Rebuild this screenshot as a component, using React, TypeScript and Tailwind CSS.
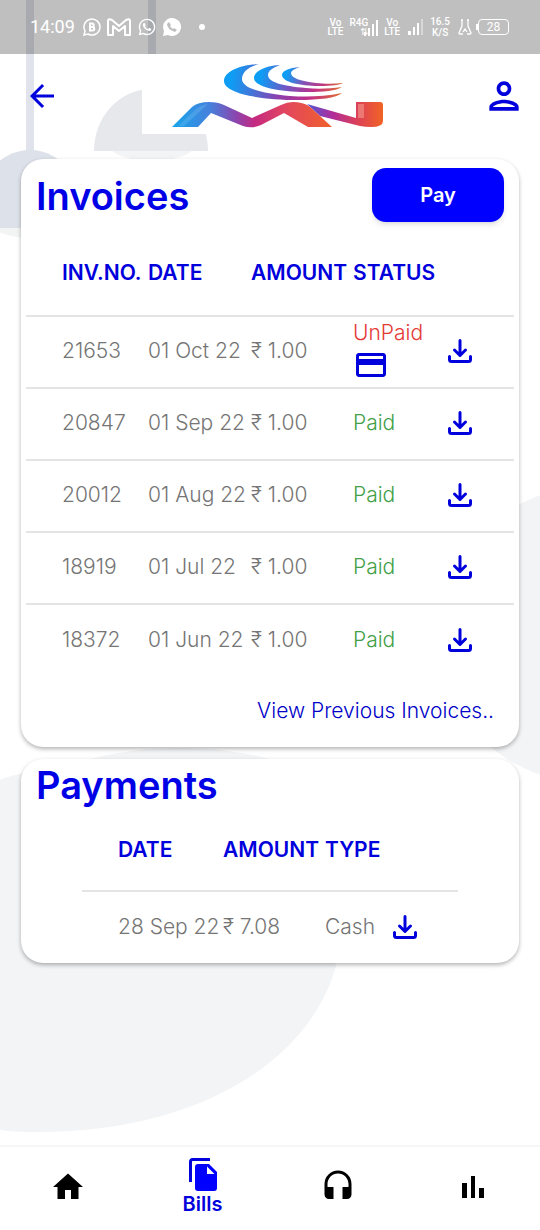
import React from 'react';
import { MdArrowBack, MdOutlinePerson, MdHome, MdHeadset, MdPayment, MdWhatsapp } from 'react-icons/md';

const invoices = [
  { no: '21653', date: '01 Oct 22', amount: '₹ 1.00', paid: false },
  { no: '20847', date: '01 Sep 22', amount: '₹ 1.00', paid: true },
  { no: '20012', date: '01 Aug 22', amount: '₹ 1.00', paid: true },
  { no: '18919', date: '01 Jul 22', amount: '₹ 1.00', paid: true },
  { no: '18372', date: '01 Jun 22', amount: '₹ 1.00', paid: true },
];

const payments = [{ date: '28 Sep 22', amount: '₹ 7.08', type: 'Cash' }];

function Backdrop() {
  return (
    <svg className="absolute top-0 left-0 w-full" viewBox="0 0 540 1230" aria-hidden="true">
      <path fill="#e0e3eb" d="M26 0h8v152h-8zM148 0h8v58h-8z" />
      <ellipse cx="30" cy="211" rx="50" ry="27" fill="#f3f4f4" />
      <path fill="#dde1e9" d="M-30 228a60 78 0 0 1 120 0z" />
      <ellipse cx="152" cy="146" rx="42" ry="15" fill="#f3f4f6" />
      <path fill="#e6e8ec" d="M94 151a57 62 0 0 1 114 0z" />
      <ellipse cx="600" cy="635" rx="165" ry="150" fill="#f3f4f6" />
      <ellipse cx="180" cy="840" rx="190" ry="92" fill="#f3f4f6" />
      <path fill="#f3f4f6" d="M0 780q22-10 60-10v20L0 960z" />
      <path fill="#f3f4f6" d="M0 780L300 800 336 966C310 1060 200 1132 36 1132Q15 1132 0 1130z" />
    </svg>
  );
}

function DownloadIcon() {
  return (
    <svg viewBox="0 0 24 24" className="w-6 h-6" fill="none" stroke="currentColor" strokeWidth="3" strokeLinecap="round" strokeLinejoin="round">
      <path d="M12 1.500V15M6.500 11l5.500 5.500 5.500-5.500" />
      <path d="M1.500 17.500v3a2 2 0 0 0 2 2h17a2 2 0 0 0 2-2v-3" />
    </svg>
  );
}

function BillsIcon() {
  return (
    <svg viewBox="0 0 28 34" className="w-7 h-[34px]" fill="none">
      <path d="M1.500 24V3.500a2 2 0 0 1 2-2H21" stroke="currentColor" strokeWidth="3" />
      <path fill="#0000ff" fillRule="evenodd" d="M9 6h11l8 8v16a3 3 0 0 1-3 3H9a3 3 0 0 1-3-3V9a3 3 0 0 1 3-3zm9 2.500V16h7.500z" />
    </svg>
  );
}

function UsageIcon() {
  return (
    <svg viewBox="0 0 22 22" className="w-[22px] h-[22px]" fill="currentColor">
      <path d="M0 7h5v15H0zM9 0h4v22H9zM17 12h5v10h-5z" />
    </svg>
  );
}

function Logo() {
  return (
    <svg viewBox="0 0 258 80" className="w-[258px] h-20" role="img" aria-label="MN">
      <defs>
        <linearGradient id="swoosh" gradientUnits="userSpaceOnUse" x1="80" y1="8" x2="202" y2="30">
          <stop offset=".1" stopColor="#0d9df5" />
          <stop offset=".3" stopColor="#4a70d4" />
          <stop offset=".5" stopColor="#8c3fae" />
          <stop offset=".75" stopColor="#c22f86" />
          <stop offset="1" stopColor="#e0702e" />
        </linearGradient>
        <linearGradient id="swooshMid" gradientUnits="userSpaceOnUse" x1="112" y1="10" x2="202" y2="30">
          <stop offset=".1" stopColor="#0d9df5" />
          <stop offset=".4" stopColor="#7355c2" />
          <stop offset=".7" stopColor="#c22f86" />
          <stop offset="1" stopColor="#e0702e" />
        </linearGradient>
        <linearGradient id="swooshTop" gradientUnits="userSpaceOnUse" x1="140" y1="12" x2="202" y2="28">
          <stop offset=".1" stopColor="#0d9df5" />
          <stop offset=".4" stopColor="#8550b5" />
          <stop offset=".7" stopColor="#c0367c" />
          <stop offset="1" stopColor="#e0702e" />
        </linearGradient>
        <linearGradient id="ribbon" gradientUnits="userSpaceOnUse" x1="30" y1="0" x2="190" y2="0">
          <stop offset="0" stopColor="#16a5ea" />
          <stop offset=".24" stopColor="#4780dc" />
          <stop offset=".4" stopColor="#8b45ae" />
          <stop offset=".52" stopColor="#c52a80" />
          <stop offset=".7" stopColor="#e14560" />
          <stop offset="1" stopColor="#f1612b" />
        </linearGradient>
        <linearGradient id="tail" gradientUnits="userSpaceOnUse" x1="168" y1="0" x2="242" y2="0">
          <stop offset="0" stopColor="#5b52cf" />
          <stop offset=".3" stopColor="#b02d9a" />
          <stop offset=".65" stopColor="#dc4156" />
          <stop offset="1" stopColor="#f26522" />
        </linearGradient>
      </defs>
      <rect width="258" height="80" fill="#fff" />
      <path fill="url(#swoosh)" d="M117 10C96 11 82 18 82 27C82 39 116 46 156 46C178 46 194 44 200 39C180 43 164 43 148 42C118 39 100 34 100 25C100 18 106 13 117 10z" />
      <path fill="url(#swooshMid)" d="M138 11C121 12 112 18 112 24C112 33 138 38 164 38C182 38 194 37 200 33C186 35 174 35 164 34C140 32 126 28 126 21C126 17 130 14 138 11z" />
      <path fill="url(#swooshTop)" d="M158 13C146 14 140 17 140 21C140 28 158 32 177 32C190 32 198 31 201 29C192 30 182 30 174 29C158 27 149 24 149 19C149 17 152 15 158 13z" />
      <path fill="url(#tail)" d="M165 50l49 14V48h24q3 0 3 3v16q0 6-12 6-6 0-11-1l-40-10z" />
      <path fill="#f59a8c" opacity=".6" d="M216 50h6v14h-6z" />
      <path fill="url(#ribbon)" d="M30 73l20-20q6-5 17-5 9 0 15 3l28 13 29-13q6-3 12-3 9 0 16 4l23 21h-24l-24-14-23 12q-9 4-18 1L69 59 56 73z" />
      <path fill="#8fd0f8" opacity=".25" d="M36 72l18-17q5-4 12-5L42 72z" />
    </svg>
  );
}

function StatusBar() {
  return (
    <div className="relative flex h-[54px] items-center justify-between bg-black/25 pl-[30px] pr-[31px] text-white">
      <div className="flex items-center gap-1.5">
        <span className="mr-0.5 font-[Roboto] text-[18px] leading-6">14:09</span>
        <svg viewBox="0 0 18 18" className="w-[18px] h-[18px]" fill="none" stroke="currentColor" strokeWidth="1.500">
          <path d="M1 17l1-4a8 8 0 1 1 3 3z" />
          <path strokeWidth="2" d="M7 5.500v7h2.500a1.500 1.500 0 0 0 0-3.500H7h2a1.500 1.500 0 0 0 0-3.500z" />
        </svg>
        <svg viewBox="0 0 24 18" className="w-6 h-[18px]" fill="none" stroke="currentColor" strokeWidth="2" strokeLinejoin="round">
          <path d="M1 3q0-3 4-1l7 6 7-6q4-2 4 1v14h-5V8l-6 5-6-5v9H1z" />
        </svg>
        <MdWhatsapp className="w-5 h-5" />
        <svg viewBox="0 0 18 18" className="w-[18px] h-[18px]">
          <path fill="currentColor" d="M0 18l1-5a9 9 0 1 1 4 4z" />
          <path fill="#bfbfbf" d="M6 4L4 6q0 5 8 8l2-2-3-2-1 1q-2-1-3-3l1-1z" />
        </svg>
        <span className="ml-3 w-1.5 h-1.5 rounded-full bg-white" />
      </div>
      <div className="flex items-center gap-1 font-[Roboto] text-[10px] font-medium leading-[9px] text-center">
        <span>Vo<br />LTE</span>
        <div className="ml-0.5 flex items-end">
          <span className="text-right">R4G<br />⇅</span>
          <svg viewBox="0 0 14 16" className="-ml-1 w-3.5 h-4" fill="currentColor">
            <path d="M0 12h2v4H0zM4 8h2v8H4zM8 4h2v12H8zM12 0h2v16h-2z" />
          </svg>
        </div>
        <span className="ml-0.5">Vo<br />LTE</span>
        <svg viewBox="0 0 16 16" className="ml-1 w-4 h-4" fill="currentColor">
          <path d="M0 12h3v4H0zM5 8h2v8H5zM9 4h2v12H9z" />
          <path opacity=".4" d="M13 0h2v16h-2z" />
        </svg>
        <span className="ml-0.5 leading-[11px]">16.5<br />K/S</span>
        <svg viewBox="0 0 14 16" className="ml-1 w-3.5 h-4" fill="none" stroke="currentColor" strokeWidth="1.300">
          <path d="M4 1v6l-3 7q0 1 1 1h3M10 1v6l3 7q0 1-1 1H9M5 13l2-3 2 3M3 1h2M9 1h2" />
        </svg>
        <div className="flex items-center">
          <span className="w-0.5 h-1.5 bg-white" />
          <span className="w-[31px] rounded-sm border border-white text-[12px] font-normal leading-[14px]">28</span>
        </div>
      </div>
    </div>
  );
}

export default function App() {
  return (
    <div className="relative flex min-h-screen flex-col overflow-hidden bg-white font-[Inter,sans-serif] text-[21px] leading-7 text-[#757575]">
      <Backdrop />
      <StatusBar />

      {/* App header */}
      <header className="relative flex h-[105px] items-start justify-between pl-6 pr-3.5">
        <button aria-label="Back" className="mt-6 text-[#0000dc]">
          <MdArrowBack className="w-9 h-9" />
        </button>
        <Logo />
        <button aria-label="Profile" className="mt-5 text-[#0000dc]">
          <MdOutlinePerson className="w-11 h-11" />
        </button>
      </header>

      <main className="relative flex flex-1 flex-col gap-3 px-[21px]">
        {/* Invoices */}
        <section className="rounded-[22px] bg-white px-[5px] pb-[22px] shadow-[0_2px_4px_rgba(0,0,0,0.3)]">
          <div className="flex items-start justify-between px-2.5 pt-[9px]">
            <h1 className="mt-1 text-[38px] font-semibold leading-[48px] text-[#0000e6]">Invoices</h1>
            <button className="h-[54px] w-[132px] rounded-[14px] bg-[#0000ff] text-[20px] font-semibold text-white shadow-md">
              Pay
            </button>
          </div>
          <table className="mt-2 w-full table-fixed text-left whitespace-nowrap">
            <colgroup>
              <col className="w-[122px]" />
              <col className="w-[103px]" />
              <col className="w-[102px]" />
              <col className="w-[95px]" />
              <col />
            </colgroup>
            <thead>
              <tr className="h-[86px] text-[#0000dc]">
                <th className="pl-9 font-semibold">INV.NO.</th>
                <th className="font-semibold">DATE</th>
                <th className="font-semibold">AMOUNT</th>
                <th className="font-semibold">STATUS</th>
                <th aria-label="Download" />
              </tr>
            </thead>
            <tbody>
              {invoices.map((inv) => (
                <tr key={inv.no} className="h-[72px] border-t-2 border-[#e4e4e4] font-light">
                  <td className="pl-9 pb-0.5">{inv.no}</td>
                  <td className="pb-0.5">{inv.date}</td>
                  <td className="pb-0.5">{inv.amount}</td>
                  <td className="pb-0.5">
                    {inv.paid ? (
                      <span className="text-[#43a047]">Paid</span>
                    ) : (
                      <div className="flex flex-col items-start text-[#e53935]">
                        UnPaid
                        <button aria-label="Pay invoice" className="text-[#0000dc]">
                          <MdPayment className="w-9 h-9" />
                        </button>
                      </div>
                    )}
                  </td>
                  <td className="pb-0.5">
                    <button aria-label="Download invoice" className="block text-[#0000dc]">
                      <DownloadIcon />
                    </button>
                  </td>
                </tr>
              ))}
            </tbody>
          </table>
          <div className="flex justify-end pr-5 pt-[21px]">
            <a href="#previous" className="font-light text-[#0000c8]">View Previous Invoices..</a>
          </div>
        </section>

        {/* Payments */}
        <section className="rounded-[22px] bg-white shadow-[0_2px_4px_rgba(0,0,0,0.3)]">
          <h2 className="pl-[15px] pt-0.5 text-[38px] font-semibold leading-[48px] text-[#0000e6]">Payments</h2>
          <table className="mx-auto w-[376px] table-fixed text-left whitespace-nowrap">
            <colgroup>
              <col className="w-[141px]" />
              <col className="w-[102px]" />
              <col className="w-[68px]" />
              <col />
            </colgroup>
            <thead>
              <tr className="h-[82px] text-[#0000dc]">
                <th className="pl-9 font-semibold">DATE</th>
                <th className="font-semibold">AMOUNT</th>
                <th className="font-semibold">TYPE</th>
                <th aria-label="Download" />
              </tr>
            </thead>
            <tbody>
              {payments.map((p) => (
                <tr key={p.date} className="h-[72px] border-t-2 border-[#e4e4e4] font-light">
                  <td className="pl-9 pb-0.5">{p.date}</td>
                  <td className="pb-0.5">{p.amount}</td>
                  <td className="pb-0.5">{p.type}</td>
                  <td className="pb-0.5">
                    <button aria-label="Download receipt" className="block text-[#0000dc]">
                      <DownloadIcon />
                    </button>
                  </td>
                </tr>
              ))}
            </tbody>
          </table>
        </section>
      </main>

      {/* Bottom navigation */}
      <nav className="relative grid h-[85px] grid-cols-4 items-center justify-items-center border-t-2 border-[#f6f6f6] bg-white pb-1 text-black">
        <a href="#home" aria-label="Home"><MdHome className="w-9 h-9" /></a>
        <a href="#bills" className="flex flex-col items-center text-[20px] font-semibold leading-6 text-[#0000dc]">
          <BillsIcon />
          Bills
        </a>
        <a href="#support" aria-label="Support"><MdHeadset className="w-9 h-9" /></a>
        <a href="#usage" aria-label="Usage"><UsageIcon /></a>
      </nav>
    </div>
  );
}
